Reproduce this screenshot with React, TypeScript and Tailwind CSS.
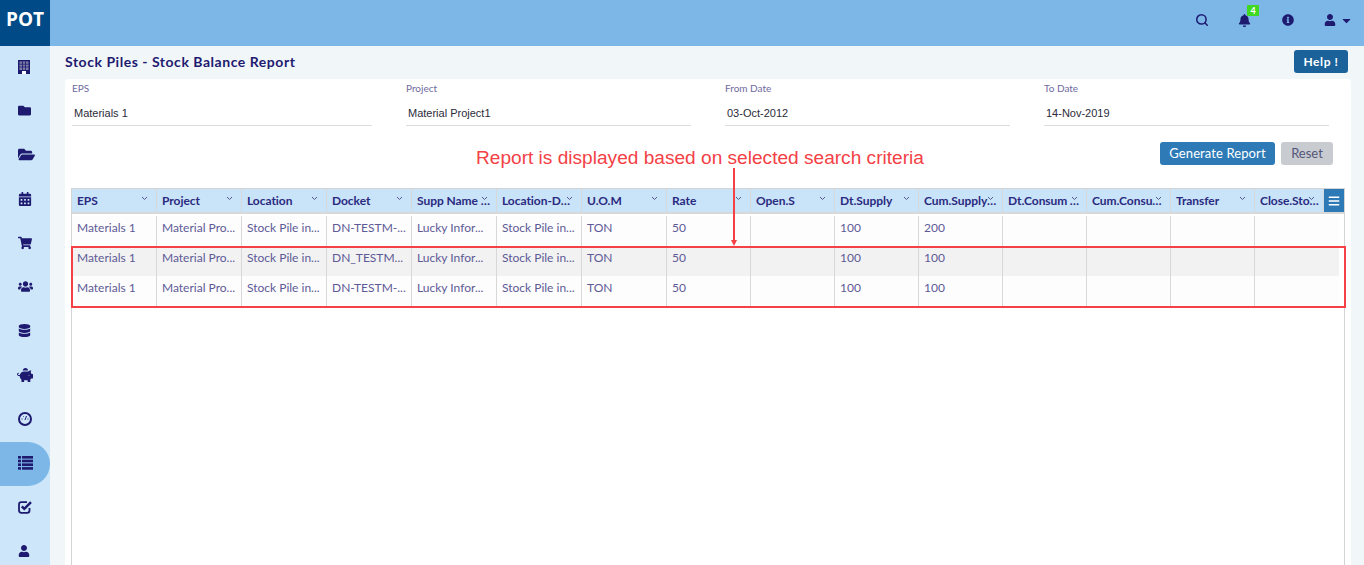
import {
  FaBars,
  FaBell,
  FaCalendarAlt,
  FaCaretDown,
  FaDatabase,
  FaFolder,
  FaFolderOpen,
  FaInfoCircle,
  FaPiggyBank,
  FaShoppingCart,
  FaUser,
  FaUsers,
} from 'react-icons/fa';
import { Search } from 'lucide-react';

function BuildingIcon() {
  return (
    <svg width="12" height="14" viewBox="0 0 12 14">
      <rect width="12" height="14" fill="#1e1a70" />
      <rect x="1.5" y="1.5" width="9" height="8.5" fill="#7d7fa8" />
      <path d="M4.5 1.5V10M7.5 1.5V10M1.5 4.2H10.5M1.5 7H10.5" stroke="#1e1a70" strokeWidth="0.8" />
      <rect x="4" y="11" width="4" height="3" fill="#ffffff" />
    </svg>
  );
}

function GaugeIcon() {
  return (
    <svg width="14" height="14" viewBox="0 0 14 14">
      <circle cx="7" cy="7" r="6" fill="none" stroke="#1e1a70" strokeWidth="2" />
      <path d="M7 8L8.5 4M3.5 7H4.5M9.5 7H10.5M5 4.5H5.6" stroke="#1e1a70" strokeWidth="1" />
    </svg>
  );
}

function ListIcon() {
  return (
    <svg width="15" height="14" viewBox="0 0 15 14" fill="#1e1a70">
      <rect y="0" width="3" height="2.6" />
      <rect x="4" y="0" width="11" height="2.6" />
      <rect y="3.7" width="3" height="2.6" />
      <rect x="4" y="3.7" width="11" height="2.6" />
      <rect y="7.4" width="3" height="2.6" />
      <rect x="4" y="7.4" width="11" height="2.6" />
      <rect y="11.1" width="3" height="2.6" />
      <rect x="4" y="11.1" width="11" height="2.6" />
    </svg>
  );
}

function CheckIcon() {
  return (
    <svg width="15" height="14" viewBox="0 0 15 14">
      <path d="M11.5 8V10.5C11.5 11.9 10.6 12.8 9.2 12.8H3.3C1.9 12.8 1 11.9 1 10.5V4.5C1 3.1 1.9 2.2 3.3 2.2H9" fill="none" stroke="#1e1a70" strokeWidth="1.8" />
      <path d="M3.8 6.4L6.3 8.9L13 2.2" fill="none" stroke="#1e1a70" strokeWidth="2.4" />
    </svg>
  );
}

const navIcons = [
  { el: <BuildingIcon /> },
  { el: <FaFolder size={13} /> },
  { el: <FaFolderOpen size={17} /> },
  { el: <FaCalendarAlt size={14} className="w-[14px]" /> },
  { el: <FaShoppingCart size={14} /> },
  { el: <FaUsers size={15} /> },
  { el: <FaDatabase size={13} /> },
  { el: <FaPiggyBank size={16} className="-ml-[1px]" /> },
  { el: <GaugeIcon /> },
  { el: <ListIcon />, active: true },
  { el: <CheckIcon /> },
  { el: <FaUser size={12} /> },
];

const fields = [
  { label: 'EPS', value: 'Materials 1', width: 'w-[300px]' },
  { label: 'Project', value: 'Material Project1', width: 'w-[285px]' },
  { label: 'From Date', value: '03-Oct-2012', width: 'w-[285px]' },
  { label: 'To Date', value: '14-Nov-2019', width: 'w-[285px]' },
];

const columns = [
  { name: 'EPS', width: 'w-[85px]', pad: 'pr-[4px]' },
  { name: 'Project', width: 'w-[85px]', pad: 'pr-[4px]' },
  { name: 'Location', width: 'w-[85px]', pad: 'pr-[4px]' },
  { name: 'Docket', width: 'w-[85px]', pad: 'pr-[4px]' },
  { name: 'Supp Name Info', width: 'w-[85px]', pad: 'pr-[4px]' },
  { name: 'Location-Details', width: 'w-[85px]', pad: 'pr-[8px]' },
  { name: 'U.O.M', width: 'w-[85px]', pad: 'pr-[4px]' },
  { name: 'Rate', width: 'w-[84px]', pad: 'pr-[4px]' },
  { name: 'Open.S', width: 'w-[84px]', pad: 'pr-[4px]' },
  { name: 'Dt.Supply', width: 'w-[84px]', pad: 'pr-[4px]' },
  { name: 'Cum.Supply Total', width: 'w-[84px]', pad: 'pr-[4px]' },
  { name: 'Dt.Consum Total', width: 'w-[84px]', pad: 'pr-[4px]' },
  { name: 'Cum.Consumption', width: 'w-[84px]', pad: 'pr-[4px]' },
  { name: 'Transfer', width: 'w-[84px]', pad: 'pr-[4px]' },
  { name: 'Close.Stock', width: 'w-[69px]', pad: 'pr-[4px]' },
];

const rows = [
  { id: 1, docket: 'DN-TESTM-...', cum: '200', bg: 'bg-[#fdfdfd]' },
  { id: 2, docket: 'DN_TESTM...', cum: '100', bg: 'bg-[#f2f2f2]' },
  { id: 3, docket: 'DN-TESTM-...', cum: '100', bg: 'bg-[#fdfdfd]' },
];

export default function App() {
  return (
    <div className="h-[565px] w-[1364px] overflow-hidden flex flex-col bg-[#f1f6f9] font-['Lato',sans-serif] text-[#1e1a70]">
      {/* TOP BAR */}
      <header className="h-[46px] shrink-0 flex items-center bg-[#7db7e8]">
        <div className="w-[50px] h-full bg-[#004b87] flex items-center justify-center pb-[8px] text-white text-[19px] font-bold font-['Open_Sans',sans-serif]">
          POT
        </div>
        <div className="ml-auto flex items-center h-full">
          <Search size={14} strokeWidth={2.6} className="mr-[29px] mb-[6px]" />
          <div className="relative mr-[31px] mb-[6px]">
            <FaBell size={13} />
            <span className="absolute -top-[9px] left-[9px] w-[12px] h-[11px] rounded-[1px] bg-[#3fd920] text-white text-[9px] font-bold leading-[11px] text-center">
              4
            </span>
          </div>
          <FaInfoCircle size={12} className="mr-[30px] mb-[6px]" />
          <FaUser size={12} className="mr-[4px] mb-[6px]" />
          <FaCaretDown size={13} className="mr-[11px] mb-[6px]" />
        </div>
      </header>

      <div className="flex-1 flex min-h-0">
        {/* SIDEBAR */}
        <nav className="w-[50px] shrink-0 bg-[#cde6fa] flex flex-col">
          {navIcons.map((item, i) => (
            <div
              key={i}
              className={`h-[44px] shrink-0 flex items-center pl-[18px] pb-[3px] ${item.active ? 'bg-[#7db7e8] rounded-r-[22px]' : ''}`}
            >
              {item.el}
            </div>
          ))}
        </nav>

        {/* CONTENT */}
        <main className="flex-1 min-w-0 pl-[15px] pr-[13px] relative">
          <div className="h-[33px] flex items-center justify-between">
            <h1 className="text-[14px] font-bold tracking-[0.53px] mb-[2px]">Stock Piles - Stock Balance Report</h1>
            <button className="w-[54px] h-[23px] mr-[3px] mb-[2px] rounded-[3px] bg-[#1a6299] text-white text-[12px] font-bold tracking-[0.6px]">Help !</button>
          </div>

          <section className="h-[500px] bg-white rounded-t-[4px] px-[6px]">
            <div className="flex gap-[34px] pt-[3px] pl-[1px]">
              {fields.map((f) => (
                <div key={f.label} className={f.width}>
                  <div className="text-[10px] leading-[12px] text-[#6f6aa0]">{f.label}</div>
                  <div className="h-[33px] pt-[13px] pl-[2px] mt-[-1px] border-b border-[#dddddd] font-['Liberation_Sans',sans-serif] text-[11px] leading-[14px] text-[#2b2b3a]">
                    {f.value}
                  </div>
                </div>
              ))}
            </div>

            <div className="flex justify-end gap-[6px] pr-[12px] mt-[16px]">
              <button className="w-[115px] h-[23px] pt-[1px] rounded-[3px] bg-[#2d7ab7] text-white text-[13px] tracking-[0.1px]">Generate Report</button>
              <button className="w-[52px] h-[23px] pt-[1px] rounded-[3px] bg-[#c8ccd1] text-[#55557a] text-[13px]">Reset</button>
            </div>

            {/* GRID */}
            <div className="mt-[23px] h-[400px] border border-[#d4d4d4] bg-white">
              <div className="flex h-[25px] border-b-2 border-[#d8d8d8] bg-[#c9e3f8]">
                {columns.map((c) => (
                  <div key={c.name} className={`${c.width} ${c.pad} shrink-0 relative border-r border-[#d8d8d8] pl-[5px]`}>
                    <div className="truncate text-[12px] tracking-[-0.05px] font-bold leading-[24px] text-[#2a2a80]">{c.name}</div>
                    <svg className="absolute top-[7px] right-[8px]" width="7" height="5" viewBox="0 0 7 5">
                      <path d="M1 1L3.5 3.5L6 1" fill="none" stroke="#555a90" strokeWidth="1" />
                    </svg>
                  </div>
                ))}
                <div className="flex-1 bg-[#2d7ab7] flex items-center justify-center text-white">
                  <FaBars size={12} />
                </div>
              </div>
              <div className="h-[2px]" />

              {rows.map((r) => (
                <div key={r.id} className={`flex h-[30px] ${r.bg} mr-[5px] text-[12px] leading-[24px] text-[#5d5a96]`}>
                  {[
                    'Materials 1',
                    'Material Pro...',
                    'Stock Pile in...',
                    r.docket,
                    'Lucky Infor...',
                    'Stock Pile in...',
                    'TON',
                    '50',
                    '',
                    '100',
                    r.cum,
                    '',
                    '',
                    '',
                    '',
                  ].map((text, i) => (
                    <div
                      key={i}
                      className={`${columns[i].width} shrink-0 border-r last:border-r-0 border-[#d8d8d8] pl-[5px] whitespace-nowrap overflow-hidden`}
                    >
                      {text}
                    </div>
                  ))}
                </div>
              ))}
              <div className="h-[2px] mr-[5px] bg-[#d8d8d8]" />
            </div>
          </section>

          {/* ANNOTATION */}
          <div className="absolute left-[21px] top-[200px] w-[1275px] h-[62px] border-2 border-[#f34146] pointer-events-none" />
          <div className="absolute left-[426px] top-[100px] font-['Liberation_Sans',sans-serif] text-[19.1px] leading-[24px] text-[#f34146] whitespace-nowrap">
            Report is displayed based on selected search criteria
          </div>
          <svg className="absolute left-[680px] top-[122px]" width="8" height="79" viewBox="0 0 8 79">
            <path d="M4 0V73" stroke="#f34146" strokeWidth="2" />
            <path d="M1 72H7L4 78Z" fill="#f34146" />
          </svg>
        </main>
      </div>
    </div>
  );
}
